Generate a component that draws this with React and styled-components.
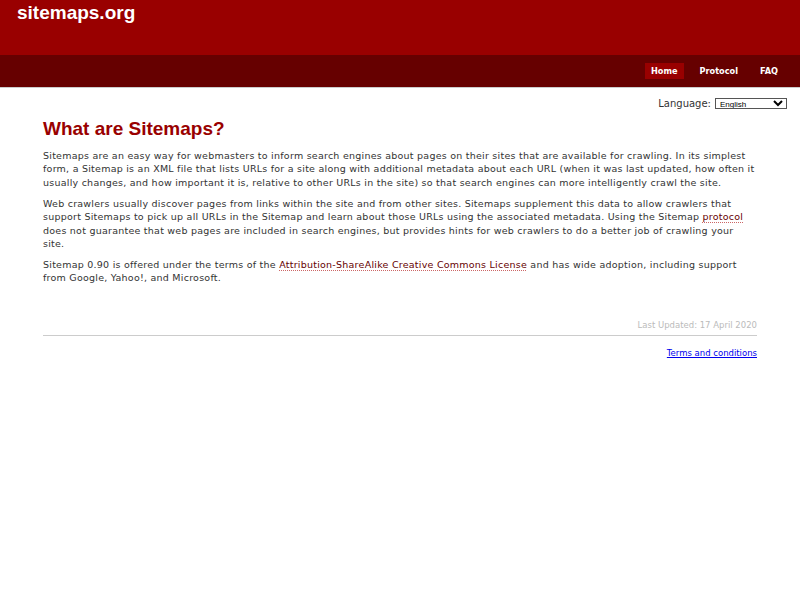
import styled, { createGlobalStyle } from "styled-components";

const Global = createGlobalStyle`
  html, body { margin: 0; padding: 0; background: #fff; }
  body { font-family: "DejaVu Sans", Verdana, sans-serif; color: #333; }
`;

const Header = styled.header`
  background: #990000;
  height: 55px;
  padding: 0 17px;
`;

const Logo = styled.a`
  display: inline-block;
  margin-top: 2px;
  font-family: "Liberation Sans", Arial, sans-serif;
  font-weight: bold;
  font-size: 19px;
  color: #fff;
  text-decoration: none;
`;

const NavBar = styled.nav`
  background: #660000;
  height: 32px;
  border-bottom: 1px solid #ccc;
  display: flex;
  justify-content: flex-end;
  align-items: center;
  padding-right: 16px;
  gap: 10px;
`;

const NavItem = styled.a`
  font-family: "DejaVu Sans", Verdana, sans-serif;
  font-size: 8.2px;
  font-weight: bold;
  color: #fff;
  text-decoration: none;
  padding: 3px 6px;
  background: ${(p) => (p.$active ? "#990000" : "transparent")};
`;

const Main = styled.main`
  padding: 0 43px;
`;

const LangRow = styled.div`
  display: flex;
  justify-content: flex-end;
  align-items: center;
  margin: 10px -30px 0 0;
  font-size: 10px;
  color: #333;
  gap: 4px;
`;

const LangSelect = styled.select`
  width: 72px;
  height: 11px;
  font-size: 8px;
  font-family: "Liberation Sans", Arial, sans-serif;
  padding: 0;
  border: 1px solid #555;
  background: #fff;
`;

const Title = styled.h1`
  font-family: "Liberation Sans", Arial, sans-serif;
  font-size: 19px;
  color: #990000;
  margin: 9px 0 9px;
`;

const Para = styled.p`
  font-size: 9.5px;
  letter-spacing: 0.24px;
  line-height: 13.4px;
  margin: 0 0 7.5px;
  color: #333;
`;

const TextLink = styled.a`
  color: #660000;
  text-decoration: underline dotted #cc6666;
  text-underline-offset: 2px;
`;

const Updated = styled.div`
  text-align: right;
  margin-top: 35px;
  font-size: 8.5px;
  color: #bbb;
  padding-bottom: 5px;
  border-bottom: 1px solid #ccc;
`;

const Footer = styled.div`
  text-align: right;
  margin-top: 12px;
  font-size: 8.5px;
  a { color: #0000ee; }
`;

export default function App() {
  return (
    <>
      <Global />
      <Header>
        <Logo href="#">sitemaps.org</Logo>
      </Header>
      <NavBar>
        <NavItem href="#" $active>Home</NavItem>
        <NavItem href="#">Protocol</NavItem>
        <NavItem href="#">FAQ</NavItem>
      </NavBar>
      <Main>
        <LangRow>
          <span>Language:</span>
          <LangSelect defaultValue="en">
            <option value="en">English</option>
          </LangSelect>
        </LangRow>
        <Title>What are Sitemaps?</Title>
        <Para>
          Sitemaps are an easy way for webmasters to inform search engines about pages on their sites that are available for crawling. In its simplest form, a Sitemap is an XML file that lists URLs for a site along with additional metadata about each URL (when it was last updated, how often it usually changes, and how important it is, relative to other URLs in the site) so that search engines can more intelligently crawl the site.
        </Para>
        <Para>
          Web crawlers usually discover pages from links within the site and from other sites. Sitemaps supplement this data to allow crawlers that support Sitemaps to pick up all URLs in the Sitemap and learn about those URLs using the associated metadata. Using the Sitemap <TextLink href="#">protocol</TextLink> does not guarantee that web pages are included in search engines, but provides hints for web crawlers to do a better job of crawling your site.
        </Para>
        <Para>
          Sitemap 0.90 is offered under the terms of the <TextLink href="#">Attribution-ShareAlike Creative Commons License</TextLink> and has wide adoption, including support from Google, Yahoo!, and Microsoft.
        </Para>
        <Updated>Last Updated: 17 April 2020</Updated>
        <Footer>
          <a href="#">Terms and conditions</a>
        </Footer>
      </Main>
    </>
  );
}
